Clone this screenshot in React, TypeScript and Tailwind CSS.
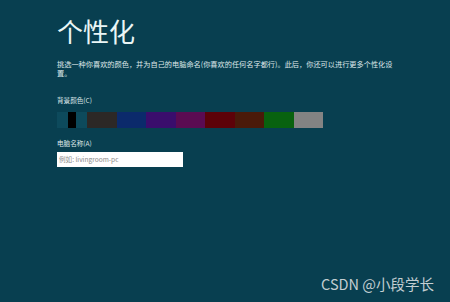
const swatches = [
  '#2c2826',
  '#0b2a6b',
  '#3a0d6c',
  '#5a0b52',
  '#5c0209',
  '#4a1a0a',
  '#08620f',
  '#838383',
];

export default function App() {
  return (
    <div
      className="relative w-[450px] h-[302px] overflow-hidden bg-[#083f50] text-white"
      style={{ fontFamily: '"Noto Sans CJK SC", "Noto Sans", sans-serif' }}
    >
      <div className="flex flex-col pl-[57px] pt-[14px]">
        {/* Title */}
        <h1 className="text-[26px] leading-[34px] font-normal text-[#eaf6f6]">个性化</h1>

        {/* Description */}
        <p className="mt-[12px] w-[340px] text-[7.2px] leading-[9px] text-[#dfe8ea]">
          挑选一种你喜欢的颜色，并为自己的电脑命名(你喜欢的任何名字都行)。此后，你还可以进行更多个性化设置。
        </p>

        {/* Background color */}
        <div className="mt-[18px] text-[6.6px] leading-[9px] text-[#dfe8ea]">背景颜色(C)</div>
        <div className="mt-[7px] flex h-[16px]">
          <div className="w-[30px] flex bg-[#0d4a5c]">
            <div className="w-[11px]" />
            <div className="w-[8px] bg-black" />
          </div>
          {swatches.map((c) => (
            <div key={c} className="w-[29.5px]" style={{ backgroundColor: c }} />
          ))}
        </div>

        {/* PC name */}
        <div className="mt-[11px] text-[6.6px] leading-[9px] text-[#dfe8ea]">电脑名称(A)</div>
        <div className="mt-[4px] w-[126px] h-[15px] bg-white flex items-center px-[2px]">
          <span className="text-[6.6px] text-[#8a8a8a]">例如: livingroom-pc</span>
        </div>
      </div>

      {/* Watermark */}
      <div className="absolute right-[16px] bottom-[7px] text-[14.5px] text-[#c3ced2]">
        CSDN @小段学长
      </div>
    </div>
  );
}
